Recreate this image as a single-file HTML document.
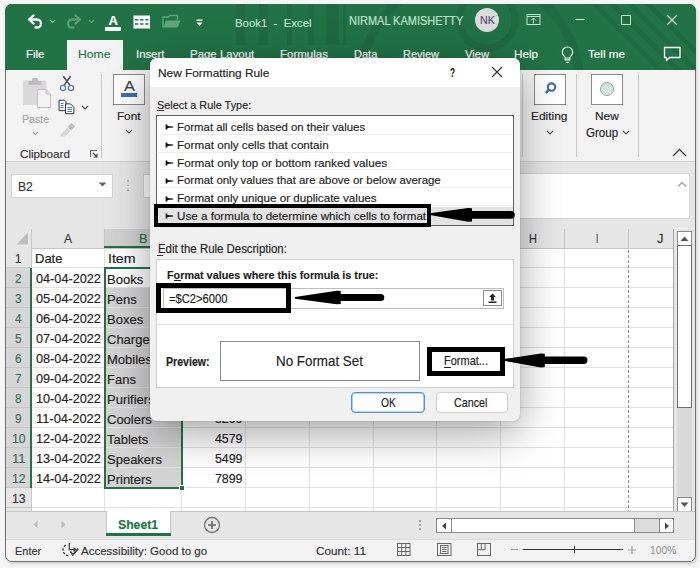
<!DOCTYPE html><html><head><meta charset="utf-8"><style>
html,body{margin:0;padding:0;}
body{width:700px;height:568px;overflow:hidden;position:relative;background:#f5f5f5;font-family:"Liberation Sans",sans-serif;}
.t{position:absolute;white-space:nowrap;-webkit-text-stroke:0.15px currentColor;}
.r{position:absolute;box-sizing:border-box;}
svg{position:absolute;overflow:visible;}
</style></head><body>
<div class="r" style="left:5px;top:4px;width:691px;height:558px;background:#f3f3f3;border-radius:7px;border:1px solid #707070;box-shadow:1px 2px 3px rgba(0,0,0,0.16);"></div>
<div class="r" style="left:5px;top:4px;width:691px;height:66px;background:#217346;border-radius:7px 7px 0 0;"></div>
<div class="r" style="left:5px;top:4px;width:691px;height:66px;overflow:hidden;border-radius:7px 7px 0 0;"><svg style="left:-5px;top:-4px" width="700" height="70">
<g fill="rgba(0,0,0,0.07)"><rect x="236" y="0" width="9" height="45"/><rect x="259" y="0" width="9" height="45"/><rect x="287" y="0" width="5" height="45"/><rect x="308" y="0" width="6" height="45"/><rect x="326" y="0" width="13" height="45"/><rect x="343" y="0" width="3" height="45"/></g>
<g fill="none" stroke="rgba(0,0,0,0.07)"><circle cx="487" cy="20" r="28" stroke-width="7"/><circle cx="470" cy="85" r="110" stroke-width="9"/>
<path d="M590 0 L670 80 M608 0 L688 80 M626 0 L706 80 M644 0 L724 80" stroke-width="5"/></g>
</svg></div>
<svg style="left:26px;top:13px;" width="18" height="18" viewBox="0 0 18 18"><path d="M7.5 2.5 L3 6.5 L7.5 10.5" fill="none" stroke="#fff" stroke-width="2.3" stroke-linecap="round" stroke-linejoin="round"/><path d="M3.5 6.5 H11 A4 4 0 0 1 11 14.5 H9.5" fill="none" stroke="#fff" stroke-width="2.3" stroke-linecap="round"/></svg>
<svg style="left:49px;top:19px;" width="7" height="5" viewBox="0 0 7 5"><path d="M1 1 L3.5 3.5 L6 1" fill="none" stroke="#8fc2a2" stroke-width="1.2"/></svg>
<svg style="left:65px;top:13px;" width="18" height="18" viewBox="0 0 18 18"><path d="M10.5 2.5 L15 6.5 L10.5 10.5" fill="none" stroke="#5a9e74" stroke-width="2.3" stroke-linecap="round" stroke-linejoin="round"/><path d="M14.5 6.5 H7 A4 4 0 0 0 7 14.5 H8.5" fill="none" stroke="#5a9e74" stroke-width="2.3" stroke-linecap="round"/></svg>
<svg style="left:88px;top:19px;" width="7" height="5" viewBox="0 0 7 5"><path d="M1 1 L3.5 3.5 L6 1" fill="none" stroke="#5a9e74" stroke-width="1.2"/></svg>
<div class="t" style="left:108.60px;top:14.05px;font-size:13.06px;line-height:13.06px;color:#fff;font-weight:bold;">A</div>
<div class="r" style="left:105px;top:27px;width:16px;height:4px;background:#fff;"></div>
<svg style="left:133px;top:15px;" width="18" height="14" viewBox="0 0 18 14"><rect x="0.5" y="0.5" width="16.5" height="13" fill="#fff"/><g stroke="#217346" stroke-width="1.5"><line x1="2" y1="4.8" x2="5.3" y2="4.8"/><line x1="7" y1="4.8" x2="10.5" y2="4.8"/><line x1="12.2" y1="4.8" x2="15.5" y2="4.8"/><line x1="2" y1="9" x2="5.3" y2="9"/><line x1="7" y1="9" x2="10.5" y2="9"/><line x1="12.2" y1="9" x2="15.5" y2="9"/></g></svg>
<svg style="left:162px;top:14px;" width="19" height="15" viewBox="0 0 19 15"><path d="M1 13.5 V3 H6.5 L8 1.5 H15.5 V6" fill="none" stroke="#5fa57b" stroke-width="1.3"/><path d="M1 13.5 L4 6.5 H18.5 L15.5 13.5 Z" fill="#5fa57b"/></svg>
<svg style="left:195px;top:18px;" width="9" height="9" viewBox="0 0 9 9"><rect x="1.5" y="1.5" width="6" height="1.4" fill="#fff"/><path d="M1.5 4.5 H7.5 L4.5 8 Z" fill="#fff"/></svg>
<div class="t" style="left:235.00px;top:18.36px;font-size:11.39px;line-height:11.39px;color:#c5e3cf;">Book1&nbsp;&nbsp;-&nbsp;&nbsp;Excel</div>
<div class="t" style="left:349.30px;top:14.74px;font-size:12.36px;line-height:12.36px;color:#c5e3cf;transform:scaleX(0.8883);transform-origin:0 0;">NIRMAL KAMISHETTY</div>
<div class="r" style="left:475px;top:8px;width:24px;height:24px;background:#dcdcdc;border-radius:50%;"></div>
<div class="t" style="left:479.50px;top:15.26px;font-size:11.39px;line-height:11.39px;color:#5c4a72;transform:scaleX(0.9475);transform-origin:0 0;">NK</div>
<svg style="left:526px;top:14px;" width="15" height="11" viewBox="0 0 15 11"><rect x="1" y="0.5" width="13" height="10" fill="none" stroke="#c5e3cf" stroke-width="1"/><line x1="1" y1="2.5" x2="14" y2="2.5" stroke="#c5e3cf"/><path d="M7.5 9.5 V4.5 M5 6.5 L7.5 4 L10 6.5" fill="none" stroke="#c5e3cf" stroke-width="1"/></svg>
<div class="r" style="left:575px;top:19px;width:10px;height:1px;background:#c5e3cf;"></div>
<div class="r" style="left:621px;top:15px;width:10px;height:10px;border:1px solid #c5e3cf;"></div>
<svg style="left:666px;top:14px;" width="12" height="12" viewBox="0 0 12 12"><path d="M1 1 L11 11 M11 1 L1 11" stroke="#c5e3cf" stroke-width="1.2"/></svg>
<div class="r" style="left:67px;top:40px;width:56px;height:30px;background:#f3f3f3;"></div>
<div class="t" style="left:25.70px;top:49.31px;font-size:11.81px;line-height:11.81px;color:#fff;transform:scaleX(0.9733);transform-origin:0 0;">File</div>
<div class="t" style="left:78.40px;top:49.31px;font-size:11.81px;line-height:11.81px;color:#217346;transform:scaleX(1.0342);transform-origin:0 0;">Home</div>
<div class="t" style="left:136.30px;top:49.31px;font-size:11.81px;line-height:11.81px;color:#fff;transform:scaleX(0.9589);transform-origin:0 0;">Insert</div>
<div class="t" style="left:189.70px;top:49.31px;font-size:11.81px;line-height:11.81px;color:#fff;transform:scaleX(0.9700);transform-origin:0 0;">Page Layout</div>
<div class="t" style="left:280.00px;top:49.31px;font-size:11.81px;line-height:11.81px;color:#fff;transform:scaleX(0.9750);transform-origin:0 0;">Formulas</div>
<div class="t" style="left:354.00px;top:49.31px;font-size:11.81px;line-height:11.81px;color:#fff;transform:scaleX(0.9332);transform-origin:0 0;">Data</div>
<div class="t" style="left:403.00px;top:49.31px;font-size:11.81px;line-height:11.81px;color:#fff;transform:scaleX(0.9297);transform-origin:0 0;">Review</div>
<div class="t" style="left:464.70px;top:49.31px;font-size:11.81px;line-height:11.81px;color:#fff;transform:scaleX(0.9574);transform-origin:0 0;">View</div>
<div class="t" style="left:513.70px;top:49.31px;font-size:11.81px;line-height:11.81px;color:#fff;transform:scaleX(0.9893);transform-origin:0 0;">Help</div>
<svg style="left:560px;top:45px;" width="16" height="19" viewBox="0 0 16 19"><path d="M5.2 14.8 V13 C5.2 11.2 2.3 10.2 2.3 7.2 A5.2 5.2 0 1 1 12.7 7.2 C12.7 10.2 9.8 11.2 9.8 13 V14.8 Z M5.2 13 H9.8" fill="none" stroke="#e6f2ea" stroke-width="1.2" stroke-linejoin="round"/><path d="M5.8 17.4 H9.2" stroke="#e6f2ea" stroke-width="1.2"/></svg>
<div class="t" style="left:588.00px;top:49.31px;font-size:11.81px;line-height:11.81px;color:#fff;transform:scaleX(0.9887);transform-origin:0 0;">Tell me</div>
<svg style="left:663px;top:46px;" width="19" height="17" viewBox="0 0 19 17"><path d="M1.5 1.5 H17 V11.5 H6.5 L3.5 14.5 V11.5 H1.5 Z" fill="none" stroke="#fff" stroke-width="1.3" stroke-linejoin="round"/></svg>
<div class="r" style="left:6px;top:161px;width:689px;height:1px;background:#d4d4d4;"></div>
<svg style="left:22px;top:76px;" width="31" height="33" viewBox="0 0 31 33"><rect x="1" y="4.5" width="23.4" height="24.5" fill="#d9d9d9"/><rect x="6.5" y="5" width="13" height="3.8" fill="#bcbcbc"/><rect x="10" y="2" width="5.8" height="4" rx="1.2" fill="#bcbcbc"/><path d="M15.5 13.5 H24 L28.5 18 V31.5 H15.5 Z" fill="#f4f2f4" stroke="#c2c2c2" stroke-width="1"/><path d="M24 13.5 V18 H28.5" fill="none" stroke="#c2c2c2"/></svg>
<div class="t" style="left:21.70px;top:113.71px;font-size:10.97px;line-height:10.97px;color:#a6a6a6;transform:scaleX(0.9702);transform-origin:0 0;">Paste</div>
<svg style="left:32px;top:131px;" width="7" height="5" viewBox="0 0 7 5"><path d="M1 1 L3.5 3.5 L6 1" fill="none" stroke="#a6a6a6" stroke-width="1.1"/></svg>
<svg style="left:59px;top:75px;" width="16" height="17" viewBox="0 0 16 17"><path d="M4.8 10.6 L11.6 1.3 M11.2 10.6 L4.4 1.3" stroke="#505050" stroke-width="1.6"/><circle cx="4" cy="12.9" r="2.6" fill="none" stroke="#5b80ab" stroke-width="1.3"/><circle cx="12" cy="12.9" r="2.6" fill="none" stroke="#5b80ab" stroke-width="1.3"/></svg>
<svg style="left:58px;top:99px;" width="17" height="16" viewBox="0 0 17 16"><path d="M1.1 1.2 H6.5 L8 2.7 V11.6 H1.1 Z" fill="#fff" stroke="#333" stroke-width="1"/><path d="M7.5 4.9 H12.5 L15.9 8.3 V14.7 H7.5 Z" fill="#fff" stroke="#333" stroke-width="1"/><path d="M2.7 4.5 H5.5 M2.7 6.5 H5.5 M2.7 8.5 H5.5 M9.3 8.5 H14 M9.3 10.5 H14 M9.3 12.5 H14" stroke="#4a79b0" stroke-width="1"/></svg>
<svg style="left:81px;top:105px;" width="8" height="5" viewBox="0 0 8 5"><path d="M1 1 L4 4 L7 1" fill="none" stroke="#444" stroke-width="1.2"/></svg>
<svg style="left:59px;top:122px;" width="17" height="15" viewBox="0 0 17 15"><path d="M12.5 1 L16 4.5 L12 8.5 L8.5 5 Z" fill="#bdbdbd"/><path d="M8.5 6 L11.5 9 L6 14.5 L1.5 14.5 L1.5 12.5 Z" fill="#d6d6d6"/></svg>
<div class="t" style="left:20.40px;top:149.06px;font-size:10.56px;line-height:10.56px;color:#333;transform:scaleX(1.1067);transform-origin:0 0;">Clipboard</div>
<svg style="left:90px;top:150px;" width="9" height="9" viewBox="0 0 9 9"><path d="M0.5 7 V0.5 H7" fill="none" stroke="#666" stroke-width="1"/><path d="M3 3 L7 7 M7 3.8 V7 H3.8" fill="none" stroke="#444" stroke-width="1.1"/></svg>
<div class="r" style="left:101px;top:74px;width:1px;height:84px;background:#c8c8c8;"></div>
<div class="r" style="left:113px;top:74px;width:32px;height:31px;background:#fff;border:1px solid #8a8a8a;"></div>
<div class="t" style="left:123.50px;top:79.34px;font-size:14.72px;line-height:14.72px;color:#444;transform:scaleX(1.1152);transform-origin:0 0;">A</div>
<div class="r" style="left:121px;top:93px;width:16px;height:4px;background:#3c6fb6;"></div>
<div class="t" style="left:116.90px;top:110.91px;font-size:11.81px;line-height:11.81px;color:#222;">Font</div>
<svg style="left:125px;top:129px;" width="8" height="5" viewBox="0 0 8 5"><path d="M1 1 L4 4 L7 1" fill="none" stroke="#555" stroke-width="1.1"/></svg>
<div class="r" style="left:522px;top:74px;width:1px;height:83px;background:#c8c8c8;"></div>
<div class="r" style="left:534px;top:74px;width:32px;height:31px;background:#fff;border:1px solid #8a8a8a;"></div>
<svg style="left:541px;top:80px;" width="17" height="17" viewBox="0 0 17 17"><circle cx="10.5" cy="7.1" r="3.7" fill="none" stroke="#3b6ea8" stroke-width="2.1"/><path d="M7.8 9.9 L5.6 12.2" stroke="#3b6ea8" stroke-width="2.6" stroke-linecap="round"/></svg>
<div class="t" style="left:531.40px;top:111.31px;font-size:11.81px;line-height:11.81px;color:#222;transform:scaleX(1.0104);transform-origin:0 0;">Editing</div>
<svg style="left:546px;top:130px;" width="8" height="5" viewBox="0 0 8 5"><path d="M1 1 L4 4 L7 1" fill="none" stroke="#555" stroke-width="1.1"/></svg>
<div class="r" style="left:576px;top:74px;width:1px;height:83px;background:#c8c8c8;"></div>
<div class="r" style="left:591px;top:74px;width:32px;height:31px;background:#fff;border:1px solid #8a8a8a;"></div>
<div class="r" style="left:600px;top:81.7px;width:14px;height:14.0px;background:#d3e6df;border:1px solid #8aa89a;border-radius:50%;"></div>
<div class="t" style="left:595.00px;top:111.31px;font-size:11.81px;line-height:11.81px;color:#222;transform:scaleX(1.0097);transform-origin:0 0;">New</div>
<div class="t" style="left:585.80px;top:127.14px;font-size:12.36px;line-height:12.36px;color:#222;transform:scaleX(0.9370);transform-origin:0 0;">Group</div>
<svg style="left:622px;top:130px;" width="8" height="5" viewBox="0 0 8 5"><path d="M1 1 L4 4 L7 1" fill="none" stroke="#555" stroke-width="1.1"/></svg>
<div class="r" style="left:638px;top:74px;width:1px;height:83px;background:#c8c8c8;"></div>
<svg style="left:672px;top:148px;" width="15" height="10" viewBox="0 0 15 10"><path d="M1 8 L7.5 1.5 L14 8" fill="none" stroke="#444" stroke-width="1.3"/></svg>
<div class="r" style="left:6px;top:162px;width:689px;height:66px;background:#e6e6e6;"></div>
<div class="r" style="left:11px;top:174px;width:102px;height:24px;background:#fff;border:1px solid #d4d4d4;"></div>
<div class="t" style="left:18.30px;top:180.80px;font-size:12.64px;line-height:12.64px;color:#333;transform:scaleX(0.9559);transform-origin:0 0;">B2</div>
<svg style="left:98px;top:182px;" width="9" height="5" viewBox="0 0 9 5"><path d="M0.5 0.5 H8.5 L4.5 4.5 Z" fill="#666"/></svg>
<div class="r" style="left:127px;top:180px;width:2px;height:1.5999999999999943px;background:#a8a8a8;border-radius:1px;"></div>
<div class="r" style="left:127px;top:184.5px;width:2px;height:1.5999999999999943px;background:#a8a8a8;border-radius:1px;"></div>
<div class="r" style="left:127px;top:189px;width:2px;height:1.5999999999999943px;background:#a8a8a8;border-radius:1px;"></div>
<div class="r" style="left:143px;top:174px;width:57px;height:24px;background:#fff;border:1px solid #d4d4d4;"></div>
<div class="r" style="left:200px;top:173px;width:490px;height:46px;background:#fff;border:1px solid #d4d4d4;"></div>
<svg style="left:677px;top:181px;" width="10" height="7" viewBox="0 0 10 7"><path d="M1 5.5 L5 1.5 L9 5.5" fill="none" stroke="#a0a0a0" stroke-width="1.3"/></svg>
<div class="r" style="left:31px;top:248px;width:643px;height:263px;background:#fff;"></div>
<div class="r" style="left:104px;top:288px;width:77px;height:200px;background:#d3d3d3;"></div>
<div class="r" style="left:31px;top:267px;width:643px;height:1px;background:#e1e1e1;"></div>
<div class="r" style="left:31px;top:287px;width:643px;height:1px;background:#e1e1e1;"></div>
<div class="r" style="left:31px;top:307px;width:643px;height:1px;background:#e1e1e1;"></div>
<div class="r" style="left:31px;top:327px;width:643px;height:1px;background:#e1e1e1;"></div>
<div class="r" style="left:31px;top:347px;width:643px;height:1px;background:#e1e1e1;"></div>
<div class="r" style="left:31px;top:367px;width:643px;height:1px;background:#e1e1e1;"></div>
<div class="r" style="left:31px;top:387px;width:643px;height:1px;background:#e1e1e1;"></div>
<div class="r" style="left:31px;top:407px;width:643px;height:1px;background:#e1e1e1;"></div>
<div class="r" style="left:31px;top:427px;width:643px;height:1px;background:#e1e1e1;"></div>
<div class="r" style="left:31px;top:447px;width:643px;height:1px;background:#e1e1e1;"></div>
<div class="r" style="left:31px;top:467px;width:643px;height:1px;background:#e1e1e1;"></div>
<div class="r" style="left:31px;top:487px;width:643px;height:1px;background:#e1e1e1;"></div>
<div class="r" style="left:31px;top:507px;width:643px;height:1px;background:#e1e1e1;"></div>
<div class="r" style="left:31px;top:527px;width:643px;height:1px;background:#e1e1e1;"></div>
<div class="r" style="left:104px;top:248px;width:1px;height:263px;background:#e1e1e1;"></div>
<div class="r" style="left:181px;top:248px;width:1px;height:263px;background:#e1e1e1;"></div>
<div class="r" style="left:245px;top:248px;width:1px;height:263px;background:#e1e1e1;"></div>
<div class="r" style="left:309px;top:248px;width:1px;height:263px;background:#e1e1e1;"></div>
<div class="r" style="left:373px;top:248px;width:1px;height:263px;background:#e1e1e1;"></div>
<div class="r" style="left:436px;top:248px;width:1px;height:263px;background:#e1e1e1;"></div>
<div class="r" style="left:500px;top:248px;width:1px;height:263px;background:#e1e1e1;"></div>
<div class="r" style="left:564px;top:248px;width:1px;height:263px;background:#e1e1e1;"></div>
<div class="r" style="left:628px;top:248px;width:1px;height:263px;background:#e1e1e1;"></div>
<div class="r" style="left:628px;top:248px;width:1px;height:263px;background:repeating-linear-gradient(#fff 0 2px,#888 2px 5px);"></div>
<div class="r" style="left:6px;top:228px;width:668px;height:20px;background:#e6e6e6;"></div>
<div class="r" style="left:6px;top:248px;width:668px;height:1px;background:#c6c6c6;"></div>
<div class="r" style="left:31px;top:229px;width:1px;height:19px;background:#c6c6c6;"></div>
<div class="r" style="left:104px;top:229px;width:1px;height:19px;background:#c6c6c6;"></div>
<div class="r" style="left:105px;top:229px;width:76px;height:19px;background:#d2d2d2;"></div>
<div class="r" style="left:104px;top:246px;width:77px;height:2px;background:#217346;"></div>
<div class="r" style="left:181px;top:229px;width:1px;height:19px;background:#c6c6c6;"></div>
<div class="r" style="left:245px;top:229px;width:1px;height:19px;background:#c6c6c6;"></div>
<div class="r" style="left:309px;top:229px;width:1px;height:19px;background:#c6c6c6;"></div>
<div class="r" style="left:373px;top:229px;width:1px;height:19px;background:#c6c6c6;"></div>
<div class="r" style="left:436px;top:229px;width:1px;height:19px;background:#c6c6c6;"></div>
<div class="r" style="left:500px;top:229px;width:1px;height:19px;background:#c6c6c6;"></div>
<div class="r" style="left:564px;top:229px;width:1px;height:19px;background:#c6c6c6;"></div>
<div class="r" style="left:628px;top:229px;width:1px;height:19px;background:#c6c6c6;"></div>
<div class="t" style="left:64.00px;top:233.17px;font-size:12.08px;line-height:12.08px;color:#333;transform:scaleX(0.9882);transform-origin:0 0;">A</div>
<div class="t" style="left:139.00px;top:233.17px;font-size:12.08px;line-height:12.08px;color:#217346;transform:scaleX(1.0578);transform-origin:0 0;">B</div>
<div class="t" style="left:528.60px;top:233.17px;font-size:12.08px;line-height:12.08px;color:#333;transform:scaleX(0.9080);transform-origin:0 0;">H</div>
<div class="t" style="left:596.00px;top:233.17px;font-size:12.08px;line-height:12.08px;color:#333;transform:scaleX(0.6502);transform-origin:0 0;">I</div>
<div class="t" style="left:657.00px;top:233.17px;font-size:12.08px;line-height:12.08px;color:#333;transform:scaleX(1.0759);transform-origin:0 0;">J</div>
<svg style="left:16px;top:232px;" width="13" height="13" viewBox="0 0 13 13"><path d="M12 0.5 V12.5 H0.5 Z" fill="#bdbdbd"/></svg>
<div class="r" style="left:6px;top:248px;width:25px;height:263px;background:#e6e6e6;"></div>
<div class="r" style="left:31px;top:229px;width:1px;height:282px;background:#c6c6c6;"></div>
<div class="r" style="left:6px;top:267px;width:25px;height:1px;background:#c6c6c6;"></div>
<div class="t" style="left:15.05px;top:253.69px;font-size:11.94px;line-height:11.94px;color:#333;transform:scaleX(0.9805);transform-origin:0 0;">1</div>
<div class="r" style="left:6px;top:268px;width:25px;height:20px;background:#d6d6d6;"></div>
<div class="r" style="left:6px;top:287px;width:25px;height:1px;background:#c6c6c6;"></div>
<div class="t" style="left:15.05px;top:273.69px;font-size:11.94px;line-height:11.94px;color:#386c56;transform:scaleX(0.9805);transform-origin:0 0;">2</div>
<div class="r" style="left:6px;top:288px;width:25px;height:20px;background:#d6d6d6;"></div>
<div class="r" style="left:6px;top:307px;width:25px;height:1px;background:#c6c6c6;"></div>
<div class="t" style="left:15.05px;top:293.69px;font-size:11.94px;line-height:11.94px;color:#386c56;transform:scaleX(0.9805);transform-origin:0 0;">3</div>
<div class="r" style="left:6px;top:308px;width:25px;height:20px;background:#d6d6d6;"></div>
<div class="r" style="left:6px;top:327px;width:25px;height:1px;background:#c6c6c6;"></div>
<div class="t" style="left:15.05px;top:313.69px;font-size:11.94px;line-height:11.94px;color:#386c56;transform:scaleX(0.9805);transform-origin:0 0;">4</div>
<div class="r" style="left:6px;top:328px;width:25px;height:20px;background:#d6d6d6;"></div>
<div class="r" style="left:6px;top:347px;width:25px;height:1px;background:#c6c6c6;"></div>
<div class="t" style="left:15.05px;top:333.69px;font-size:11.94px;line-height:11.94px;color:#386c56;transform:scaleX(0.9805);transform-origin:0 0;">5</div>
<div class="r" style="left:6px;top:348px;width:25px;height:20px;background:#d6d6d6;"></div>
<div class="r" style="left:6px;top:367px;width:25px;height:1px;background:#c6c6c6;"></div>
<div class="t" style="left:15.05px;top:353.69px;font-size:11.94px;line-height:11.94px;color:#386c56;transform:scaleX(0.9805);transform-origin:0 0;">6</div>
<div class="r" style="left:6px;top:368px;width:25px;height:20px;background:#d6d6d6;"></div>
<div class="r" style="left:6px;top:387px;width:25px;height:1px;background:#c6c6c6;"></div>
<div class="t" style="left:15.05px;top:373.69px;font-size:11.94px;line-height:11.94px;color:#386c56;transform:scaleX(0.9805);transform-origin:0 0;">7</div>
<div class="r" style="left:6px;top:388px;width:25px;height:20px;background:#d6d6d6;"></div>
<div class="r" style="left:6px;top:407px;width:25px;height:1px;background:#c6c6c6;"></div>
<div class="t" style="left:15.05px;top:393.69px;font-size:11.94px;line-height:11.94px;color:#386c56;transform:scaleX(0.9805);transform-origin:0 0;">8</div>
<div class="r" style="left:6px;top:408px;width:25px;height:20px;background:#d6d6d6;"></div>
<div class="r" style="left:6px;top:427px;width:25px;height:1px;background:#c6c6c6;"></div>
<div class="t" style="left:15.05px;top:413.69px;font-size:11.94px;line-height:11.94px;color:#386c56;transform:scaleX(0.9805);transform-origin:0 0;">9</div>
<div class="r" style="left:6px;top:428px;width:25px;height:20px;background:#d6d6d6;"></div>
<div class="r" style="left:6px;top:447px;width:25px;height:1px;background:#c6c6c6;"></div>
<div class="t" style="left:11.55px;top:433.69px;font-size:11.94px;line-height:11.94px;color:#386c56;transform:scaleX(1.0182);transform-origin:0 0;">10</div>
<div class="r" style="left:6px;top:448px;width:25px;height:20px;background:#d6d6d6;"></div>
<div class="r" style="left:6px;top:467px;width:25px;height:1px;background:#c6c6c6;"></div>
<div class="t" style="left:11.55px;top:453.69px;font-size:11.94px;line-height:11.94px;color:#386c56;transform:scaleX(1.0868);transform-origin:0 0;">11</div>
<div class="r" style="left:6px;top:468px;width:25px;height:20px;background:#d6d6d6;"></div>
<div class="r" style="left:6px;top:487px;width:25px;height:1px;background:#c6c6c6;"></div>
<div class="t" style="left:11.55px;top:473.69px;font-size:11.94px;line-height:11.94px;color:#386c56;transform:scaleX(1.0182);transform-origin:0 0;">12</div>
<div class="r" style="left:6px;top:507px;width:25px;height:1px;background:#c6c6c6;"></div>
<div class="t" style="left:11.55px;top:493.69px;font-size:11.94px;line-height:11.94px;color:#333;transform:scaleX(1.0182);transform-origin:0 0;">13</div>
<div class="r" style="left:30px;top:268px;width:2px;height:220px;background:#217346;"></div>
<div class="t" style="left:34.80px;top:253.45px;font-size:12.22px;line-height:12.22px;color:#222;transform:scaleX(1.0625);transform-origin:0 0;">Date</div>
<div class="t" style="left:107.50px;top:253.45px;font-size:12.22px;line-height:12.22px;color:#222;transform:scaleX(1.1568);transform-origin:0 0;">Item</div>
<div class="t" style="left:36.30px;top:273.10px;font-size:12.64px;line-height:12.64px;color:#222;transform:scaleX(1.0054);transform-origin:0 0;">04-04-2022</div>
<div class="r" style="left:104px;top:268px;width:77px;height:20px;overflow:hidden;"><div class="t" style="left:3px;top:4.60px;font-size:13px;line-height:13px;color:#222;">Books</div></div>
<div class="t" style="left:181px;width:61.5px;text-align:right;top:273.10px;font-size:12.4px;line-height:12.4px;color:#222;">1500</div>
<div class="t" style="left:36.30px;top:293.10px;font-size:12.64px;line-height:12.64px;color:#222;transform:scaleX(1.0054);transform-origin:0 0;">05-04-2022</div>
<div class="r" style="left:104px;top:288px;width:77px;height:20px;overflow:hidden;"><div class="t" style="left:3px;top:4.60px;font-size:13px;line-height:13px;color:#222;">Pens</div></div>
<div class="t" style="left:181px;width:61.5px;text-align:right;top:293.10px;font-size:12.4px;line-height:12.4px;color:#222;">2300</div>
<div class="t" style="left:36.30px;top:313.10px;font-size:12.64px;line-height:12.64px;color:#222;transform:scaleX(1.0054);transform-origin:0 0;">06-04-2022</div>
<div class="r" style="left:104px;top:308px;width:77px;height:20px;overflow:hidden;"><div class="t" style="left:3px;top:4.60px;font-size:13px;line-height:13px;color:#222;">Boxes</div></div>
<div class="t" style="left:181px;width:61.5px;text-align:right;top:313.10px;font-size:12.4px;line-height:12.4px;color:#222;">3100</div>
<div class="t" style="left:36.30px;top:333.10px;font-size:12.64px;line-height:12.64px;color:#222;transform:scaleX(1.0054);transform-origin:0 0;">07-04-2022</div>
<div class="r" style="left:104px;top:328px;width:77px;height:20px;overflow:hidden;"><div class="t" style="left:3px;top:4.60px;font-size:13px;line-height:13px;color:#222;">Chargers</div></div>
<div class="t" style="left:181px;width:61.5px;text-align:right;top:333.10px;font-size:12.4px;line-height:12.4px;color:#222;">4200</div>
<div class="t" style="left:36.30px;top:353.10px;font-size:12.64px;line-height:12.64px;color:#222;transform:scaleX(1.0054);transform-origin:0 0;">08-04-2022</div>
<div class="r" style="left:104px;top:348px;width:77px;height:20px;overflow:hidden;"><div class="t" style="left:3px;top:4.60px;font-size:13px;line-height:13px;color:#222;">Mobiles</div></div>
<div class="t" style="left:181px;width:61.5px;text-align:right;top:353.10px;font-size:12.4px;line-height:12.4px;color:#222;">6500</div>
<div class="t" style="left:36.30px;top:373.10px;font-size:12.64px;line-height:12.64px;color:#222;transform:scaleX(1.0054);transform-origin:0 0;">09-04-2022</div>
<div class="r" style="left:104px;top:368px;width:77px;height:20px;overflow:hidden;"><div class="t" style="left:3px;top:4.60px;font-size:13px;line-height:13px;color:#222;">Fans</div></div>
<div class="t" style="left:181px;width:61.5px;text-align:right;top:373.10px;font-size:12.4px;line-height:12.4px;color:#222;">3300</div>
<div class="t" style="left:36.30px;top:393.10px;font-size:12.64px;line-height:12.64px;color:#222;transform:scaleX(1.0054);transform-origin:0 0;">10-04-2022</div>
<div class="r" style="left:104px;top:388px;width:77px;height:20px;overflow:hidden;"><div class="t" style="left:3px;top:4.60px;font-size:13px;line-height:13px;color:#222;">Purifiers</div></div>
<div class="t" style="left:181px;width:61.5px;text-align:right;top:393.10px;font-size:12.4px;line-height:12.4px;color:#222;">7100</div>
<div class="t" style="left:36.30px;top:413.10px;font-size:12.64px;line-height:12.64px;color:#222;transform:scaleX(1.0204);transform-origin:0 0;">11-04-2022</div>
<div class="r" style="left:104px;top:408px;width:77px;height:20px;overflow:hidden;"><div class="t" style="left:3px;top:4.60px;font-size:13px;line-height:13px;color:#222;">Coolers</div></div>
<div class="t" style="left:181px;width:61.5px;text-align:right;top:413.10px;font-size:12.4px;line-height:12.4px;color:#222;">5200</div>
<div class="t" style="left:36.30px;top:433.10px;font-size:12.64px;line-height:12.64px;color:#222;transform:scaleX(1.0054);transform-origin:0 0;">12-04-2022</div>
<div class="r" style="left:104px;top:428px;width:77px;height:20px;overflow:hidden;"><div class="t" style="left:3px;top:4.60px;font-size:13px;line-height:13px;color:#222;">Tablets</div></div>
<div class="t" style="left:181px;width:61.5px;text-align:right;top:433.10px;font-size:12.4px;line-height:12.4px;color:#222;">4579</div>
<div class="t" style="left:36.30px;top:453.10px;font-size:12.64px;line-height:12.64px;color:#222;transform:scaleX(1.0054);transform-origin:0 0;">13-04-2022</div>
<div class="r" style="left:104px;top:448px;width:77px;height:20px;overflow:hidden;"><div class="t" style="left:3px;top:4.60px;font-size:13px;line-height:13px;color:#222;">Speakers</div></div>
<div class="t" style="left:181px;width:61.5px;text-align:right;top:453.10px;font-size:12.4px;line-height:12.4px;color:#222;">5499</div>
<div class="t" style="left:36.30px;top:473.10px;font-size:12.64px;line-height:12.64px;color:#222;transform:scaleX(1.0054);transform-origin:0 0;">14-04-2022</div>
<div class="r" style="left:104px;top:468px;width:77px;height:20px;overflow:hidden;"><div class="t" style="left:3px;top:4.60px;font-size:13px;line-height:13px;color:#222;">Printers</div></div>
<div class="t" style="left:181px;width:61.5px;text-align:right;top:473.10px;font-size:12.4px;line-height:12.4px;color:#222;">7899</div>
<div class="r" style="left:104px;top:267px;width:79px;height:222px;border:2px solid #217346;"></div>
<div class="r" style="left:178.5px;top:485px;width:6.0px;height:6px;background:#217346;border:1px solid #fff;"></div>
<div class="r" style="left:674px;top:229px;width:21px;height:282px;background:#e6e6e6;"></div>
<div class="r" style="left:677px;top:231px;width:15px;height:15px;background:#fff;border:1px solid #8a8a8a;"></div>
<svg style="left:680px;top:236px;" width="9" height="6" viewBox="0 0 9 6"><path d="M0.5 5 L4.5 0.5 L8.5 5 Z" fill="#555"/></svg>
<div class="r" style="left:677px;top:245px;width:15px;height:253px;background:#d9d9d9;"></div>
<div class="r" style="left:677px;top:245px;width:15px;height:163px;background:#fff;border:1px solid #6e6e6e;"></div>
<div class="r" style="left:673px;top:229px;width:1px;height:282px;background:#a6a6a6;"></div>
<div class="r" style="left:677px;top:497px;width:15px;height:15px;background:#fff;border:1px solid #8a8a8a;"></div>
<svg style="left:680px;top:502px;" width="9" height="6" viewBox="0 0 9 6"><path d="M0.5 0.5 H8.5 L4.5 5 Z" fill="#555"/></svg>
<div class="r" style="left:6px;top:511px;width:689px;height:28px;background:#e6e6e6;border-top:1px solid #c6c6c6;"></div>
<svg style="left:33px;top:520px;" width="5" height="9" viewBox="0 0 5 9"><path d="M4.5 0.5 V8.5 L0.5 4.5 Z" fill="#bdbdbd"/></svg>
<svg style="left:61px;top:520px;" width="5" height="9" viewBox="0 0 5 9"><path d="M0.5 0.5 V8.5 L4.5 4.5 Z" fill="#bdbdbd"/></svg>
<div class="r" style="left:106px;top:511px;width:65px;height:25px;background:#fff;border-left:1px solid #c6c6c6;border-right:1px solid #c6c6c6;"></div>
<div class="r" style="left:106px;top:533px;width:65px;height:2.5px;background:#217346;"></div>
<div class="t" style="left:118.20px;top:518.01px;font-size:13.33px;line-height:13.33px;color:#217346;font-weight:bold;transform:scaleX(0.9169);transform-origin:0 0;">Sheet1</div>
<svg style="left:203px;top:516px;" width="18" height="18" viewBox="0 0 18 18"><circle cx="9" cy="9" r="7.5" fill="none" stroke="#777" stroke-width="1.3"/><path d="M9 5 V13 M5 9 H13" stroke="#666" stroke-width="1.6"/></svg>
<div class="r" style="left:419px;top:520px;width:2px;height:2px;background:#a0a0a0;"></div>
<div class="r" style="left:419px;top:524px;width:2px;height:2px;background:#a0a0a0;"></div>
<div class="r" style="left:419px;top:528px;width:2px;height:2px;background:#a0a0a0;"></div>
<div class="r" style="left:436px;top:518px;width:238px;height:15px;background:#dcdcdc;border:1px solid #8a8a8a;"></div>
<div class="r" style="left:436px;top:518px;width:16px;height:15px;background:#fff;border:1px solid #8a8a8a;"></div>
<svg style="left:441px;top:522px;" width="6" height="8" viewBox="0 0 6 8"><path d="M5 0.5 V7.5 L1 4 Z" fill="#444"/></svg>
<div class="r" style="left:451px;top:518px;width:184px;height:15px;background:#fff;border:1px solid #8a8a8a;"></div>
<div class="r" style="left:659px;top:518px;width:15px;height:15px;background:#fff;border:1px solid #8a8a8a;"></div>
<svg style="left:664px;top:522px;" width="6" height="8" viewBox="0 0 6 8"><path d="M1 0.5 V7.5 L5 4 Z" fill="#444"/></svg>
<div class="r" style="left:6px;top:539px;width:689px;height:22px;background:#f3f3f3;border-top:1px solid #dadada;border-radius:0 0 6px 6px;"></div>
<div class="t" style="left:14.60px;top:547.13px;font-size:10.00px;line-height:10.00px;color:#333;transform:scaleX(1.0962);transform-origin:0 0;">Enter</div>
<svg style="left:61px;top:541px;" width="19" height="17" viewBox="0 0 19 17"><path d="M4.8 4.2 A5.6 5.6 0 0 0 7.8 14.6" fill="none" stroke="#444" stroke-width="1.4" stroke-dasharray="2.4 1.5"/><path d="M8.3 2 V8.5 H14.5 M12.6 6.6 L14.6 8.5 L12.6 10.4" fill="none" stroke="#444" stroke-width="1.3"/><path d="M9.4 10.6 L11.7 13.8 L17.4 7.6" fill="none" stroke="#444" stroke-width="1.7"/></svg>
<div class="t" style="left:81.40px;top:547.13px;font-size:10.00px;line-height:10.00px;color:#333;transform:scaleX(1.1516);transform-origin:0 0;">Accessibility: Good to go</div>
<div class="t" style="left:316.00px;top:547.13px;font-size:10.00px;line-height:10.00px;color:#333;transform:scaleX(1.1737);transform-origin:0 0;">Count: 11</div>
<svg style="left:396px;top:542px;" width="15" height="15" viewBox="0 0 15 15"><rect x="1.5" y="1.5" width="12.5" height="12" fill="none" stroke="#666" stroke-width="1"/><path d="M1.5 5.5 H14 M1.5 9.5 H14 M5.7 1.5 V13.5 M9.8 1.5 V13.5" stroke="#666" stroke-width="1"/></svg>
<svg style="left:437px;top:542px;" width="15" height="15" viewBox="0 0 15 15"><rect x="0.5" y="1.5" width="13.5" height="12" fill="none" stroke="#666" stroke-width="1"/><rect x="3.5" y="3.5" width="7.5" height="8" fill="none" stroke="#666" stroke-width="1"/><path d="M5 5.5 H9.5 M5 7.5 H9.5 M5 9.5 H9.5" stroke="#666" stroke-width="1"/></svg>
<svg style="left:477px;top:542px;" width="15" height="15" viewBox="0 0 15 15"><rect x="0.5" y="1.5" width="13" height="12" fill="none" stroke="#666" stroke-width="1"/><path d="M0.5 7.8 H8 V1.5 M4.3 1.5 V7.8" fill="none" stroke="#666" stroke-width="1"/></svg>
<div class="r" style="left:511px;top:549px;width:7px;height:1px;background:#999;"></div>
<div class="r" style="left:523px;top:549px;width:100px;height:1px;background:#333;"></div>
<div class="r" style="left:573.5px;top:546px;width:1.0px;height:7px;background:#333;"></div>
<svg style="left:627px;top:545px;" width="10" height="10" viewBox="0 0 10 10"><path d="M5 1 V9 M1 5 H9" stroke="#999" stroke-width="1.1"/></svg>
<div class="t" style="left:649.70px;top:544.99px;font-size:11.11px;line-height:11.11px;color:#999;transform:scaleX(0.9246);transform-origin:0 0;">100%</div>
<div class="r" style="left:150px;top:58px;width:370px;height:363px;border-radius:7px;box-shadow:0 0 2px rgba(0,0,0,0.22), 0 12px 44px rgba(0,0,0,0.36);background:#f0f0f0;"></div>
<div class="r" style="left:150px;top:58px;width:370px;height:29px;background:#fff;border-radius:7px 7px 0 0;"></div>
<div class="t" style="left:158.30px;top:67.51px;font-size:10.97px;line-height:10.97px;color:#222;transform:scaleX(1.0803);transform-origin:0 0;">New Formatting Rule</div>
<div class="t" style="left:449.80px;top:67.17px;font-size:12.08px;line-height:12.08px;color:#222;font-weight:bold;transform:scaleX(0.6783);transform-origin:0 0;">?</div>
<svg style="left:491px;top:66px;" width="12" height="12" viewBox="0 0 12 12"><path d="M1 1 L11 11 M11 1 L1 11" stroke="#333" stroke-width="1.2"/></svg>
<div class="t" style="left:157.00px;top:99.81px;font-size:11.81px;line-height:11.81px;color:#222;transform:scaleX(0.9229);transform-origin:0 0;">Select a Rule Type:</div>
<div class="r" style="left:157px;top:110px;width:7px;height:1px;background:#333;"></div>
<div class="r" style="left:156px;top:115px;width:357.5px;height:111px;background:#fff;border:1px solid #5e5e5e;"></div>
<div class="r" style="left:157px;top:206.5px;width:355.5px;height:18.5px;background:#e3e3e3;"></div>
<div class="r" style="left:158px;top:134.0px;width:354px;height:1.0px;background:#ececec;"></div>
<svg style="left:165px;top:124.4px;" width="9" height="6" viewBox="0 0 9 6"><path d="M0.6 0.6 H2.4 V1.9 L8.2 2.6 V3.4 L2.4 4.1 V5.4 H0.6 Z" fill="#111"/></svg>
<div class="t" style="left:176.90px;top:122.01px;font-size:10.97px;line-height:10.97px;color:#222;transform:scaleX(1.0389);transform-origin:0 0;">Format all cells based on their values</div>
<div class="r" style="left:158px;top:151.7px;width:354px;height:1.0px;background:#ececec;"></div>
<svg style="left:165px;top:142.20000000000002px;" width="9" height="6" viewBox="0 0 9 6"><path d="M0.6 0.6 H2.4 V1.9 L8.2 2.6 V3.4 L2.4 4.1 V5.4 H0.6 Z" fill="#111"/></svg>
<div class="t" style="left:176.90px;top:139.81px;font-size:10.97px;line-height:10.97px;color:#222;transform:scaleX(1.0631);transform-origin:0 0;">Format only cells that contain</div>
<div class="r" style="left:158px;top:169.4px;width:354px;height:1.0px;background:#ececec;"></div>
<svg style="left:165px;top:160.0px;" width="9" height="6" viewBox="0 0 9 6"><path d="M0.6 0.6 H2.4 V1.9 L8.2 2.6 V3.4 L2.4 4.1 V5.4 H0.6 Z" fill="#111"/></svg>
<div class="t" style="left:176.90px;top:157.61px;font-size:10.97px;line-height:10.97px;color:#222;transform:scaleX(1.0665);transform-origin:0 0;">Format only top or bottom ranked values</div>
<div class="r" style="left:158px;top:187.1px;width:354px;height:1.0px;background:#ececec;"></div>
<svg style="left:165px;top:177.8px;" width="9" height="6" viewBox="0 0 9 6"><path d="M0.6 0.6 H2.4 V1.9 L8.2 2.6 V3.4 L2.4 4.1 V5.4 H0.6 Z" fill="#111"/></svg>
<div class="t" style="left:176.90px;top:175.41px;font-size:10.97px;line-height:10.97px;color:#222;transform:scaleX(1.0422);transform-origin:0 0;">Format only values that are above or below average</div>
<div class="r" style="left:158px;top:204.8px;width:354px;height:1.0px;background:#ececec;"></div>
<svg style="left:165px;top:195.60000000000002px;" width="9" height="6" viewBox="0 0 9 6"><path d="M0.6 0.6 H2.4 V1.9 L8.2 2.6 V3.4 L2.4 4.1 V5.4 H0.6 Z" fill="#111"/></svg>
<div class="t" style="left:176.90px;top:193.21px;font-size:10.97px;line-height:10.97px;color:#222;transform:scaleX(1.0597);transform-origin:0 0;">Format only unique or duplicate values</div>
<svg style="left:165px;top:213.4px;" width="9" height="6" viewBox="0 0 9 6"><path d="M0.6 0.6 H2.4 V1.9 L8.2 2.6 V3.4 L2.4 4.1 V5.4 H0.6 Z" fill="#111"/></svg>
<div class="t" style="left:176.90px;top:211.01px;font-size:10.97px;line-height:10.97px;color:#222;transform:scaleX(1.0613);transform-origin:0 0;">Use a formula to determine which cells to format</div>
<div class="r" style="left:154px;top:203.5px;width:276.5px;height:23.0px;border:4.5px solid #000;"></div>
<div class="t" style="left:157.50px;top:244.39px;font-size:11.94px;line-height:11.94px;color:#222;transform:scaleX(0.9563);transform-origin:0 0;">Edit the Rule Description:</div>
<div class="r" style="left:157px;top:255px;width:6px;height:1px;background:#333;"></div>
<div class="r" style="left:156px;top:259px;width:358px;height:129px;background:#fff;border:1px solid #d0d0d0;"></div>
<div class="t" style="left:166.50px;top:269.51px;font-size:11.81px;line-height:11.81px;color:#222;font-weight:bold;transform:scaleX(0.9159);transform-origin:0 0;">Format values where this formula is true:</div>
<div class="r" style="left:174px;top:280px;width:7px;height:1px;background:#222;"></div>
<div class="r" style="left:163px;top:288px;width:341px;height:21px;background:#fff;border:1px solid #bdbdbd;"></div>
<div class="t" style="left:169.40px;top:292.64px;font-size:12.36px;line-height:12.36px;color:#222;transform:scaleX(0.9042);transform-origin:0 0;">=$C2&gt;6000</div>
<div class="r" style="left:483px;top:290px;width:19px;height:16px;background:#fff;border:1px solid #8a8a8a;"></div>
<svg style="left:486px;top:292px;" width="13" height="12" viewBox="0 0 13 12"><path d="M6.5 1.5 L10 5 H8 V8.5 H5 V5 H3 Z" fill="#222"/><rect x="2.5" y="9.5" width="8" height="1.5" fill="#222"/></svg>
<div class="r" style="left:156px;top:283px;width:135px;height:30px;border:5px solid #000;"></div>
<div class="r" style="left:157px;top:324px;width:356px;height:1px;background:#e3e3e3;"></div>
<div class="t" style="left:166.40px;top:355.87px;font-size:12.08px;line-height:12.08px;color:#222;font-weight:bold;transform:scaleX(0.8769);transform-origin:0 0;">Preview:</div>
<div class="r" style="left:220px;top:341px;width:200px;height:40px;background:#fff;border:1px solid #8a8a8a;"></div>
<div class="t" style="left:275.90px;top:354.94px;font-size:13.89px;line-height:13.89px;color:#222;transform:scaleX(0.9637);transform-origin:0 0;">No Format Set</div>
<div class="r" style="left:431px;top:350px;width:70px;height:22px;background:#fdfdfd;border:1px solid #d0d0d0;border-radius:3px;"></div>
<div class="t" style="left:443.70px;top:355.99px;font-size:11.94px;line-height:11.94px;color:#222;transform:scaleX(0.9209);transform-origin:0 0;">Format...</div>
<div class="r" style="left:444px;top:367px;width:7px;height:1px;background:#222;"></div>
<div class="r" style="left:427px;top:346.5px;width:78px;height:29.5px;border:5px solid #000;"></div>
<div class="r" style="left:351px;top:392px;width:74px;height:21px;background:#fdfdfd;border:1px solid #4f93d2;box-shadow:inset 0 0 0 0.6px #7ab0e0;border-radius:4px;"></div>
<div class="t" style="left:380.90px;top:397.40px;font-size:12.64px;line-height:12.64px;color:#222;transform:scaleX(0.8104);transform-origin:0 0;">OK</div>
<div class="r" style="left:436px;top:392px;width:72px;height:21px;background:#fdfdfd;border:1px solid #d0d0d0;border-radius:4px;"></div>
<div class="t" style="left:454.30px;top:397.40px;font-size:12.64px;line-height:12.64px;color:#222;transform:scaleX(0.8484);transform-origin:0 0;">Cancel</div>
<svg style="left:0;top:0" width="700" height="568"><path d="M430 213.29999999999998 L468 207.9 L472 208.20000000000002 L472 210.9 L510.9 210.9 A3.8999999999999915 3.8999999999999915 0 0 1 510.9 218.7 L472 218.7 L472 221.39999999999998 L468 221.7 L430 215.1 Z" fill="#000"/></svg>
<svg style="left:0;top:0" width="700" height="568"><path d="M295 297.0 L336.7 290.7 L340.7 291.0 L340.7 293.9 L380.75 293.9 A3.5500000000000114 3.5500000000000114 0 0 1 380.75 301 L340.7 301 L340.7 304.0 L336.7 304.3 L295 298.79999999999995 Z" fill="#000"/></svg>
<svg style="left:0;top:0" width="700" height="568"><path d="M504 359.0 L540.8 353.4 L544.8 353.7 L544.8 356.5 L583.75 356.5 A3.75 3.75 0 0 1 583.75 364 L544.8 364 L544.8 367.09999999999997 L540.8 367.4 L504 360.79999999999995 Z" fill="#000"/></svg>
</body></html>
